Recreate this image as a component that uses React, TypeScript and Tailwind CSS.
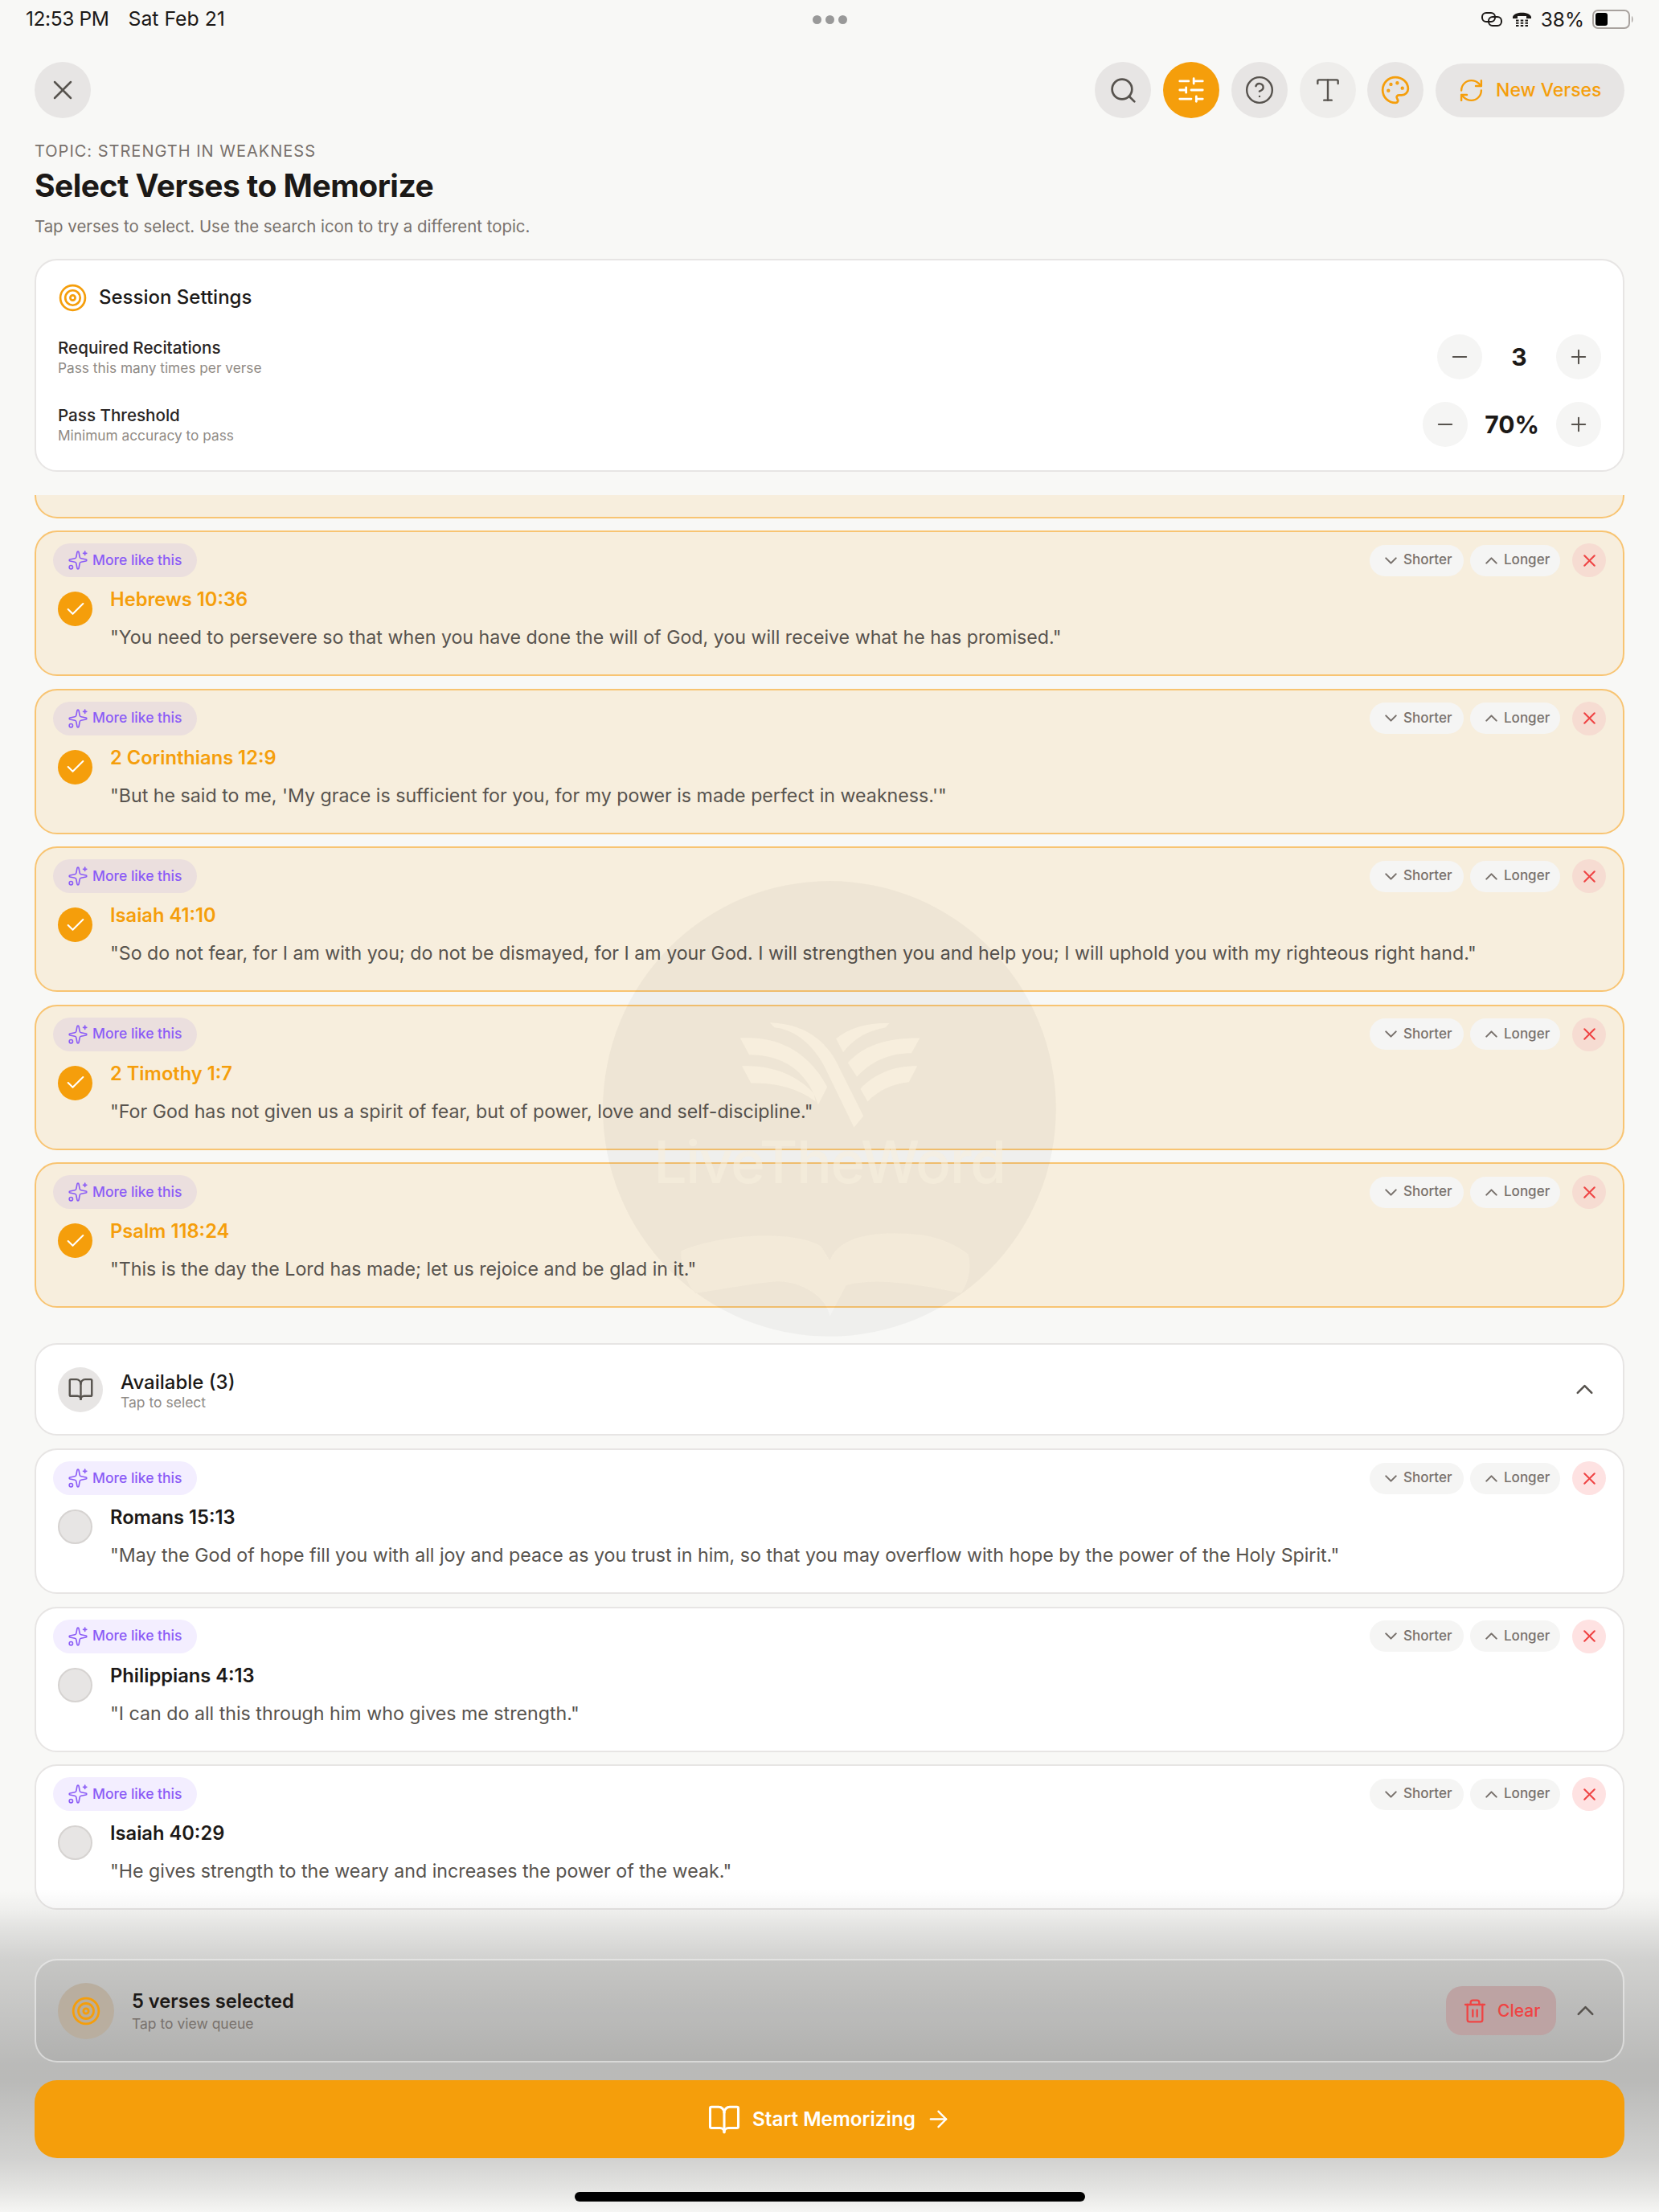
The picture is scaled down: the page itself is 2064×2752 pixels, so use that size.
import {
  ArrowRight,
  BookOpen,
  Check,
  ChevronDown,
  ChevronUp,
  CircleHelp,
  Minus,
  Palette,
  Plus,
  RefreshCw,
  Search,
  SlidersHorizontal,
  Sparkles,
  Target,
  Trash2,
  Type,
  X,
} from "lucide-react";

const selected = [
  { ref: "Hebrews 10:36", text: "\"You need to persevere so that when you have done the will of God, you will receive what he has promised.\"" },
  { ref: "2 Corinthians 12:9", text: "\"But he said to me, 'My grace is sufficient for you, for my power is made perfect in weakness.'\"" },
  { ref: "Isaiah 41:10", text: "\"So do not fear, for I am with you; do not be dismayed, for I am your God. I will strengthen you and help you; I will uphold you with my righteous right hand.\"" },
  { ref: "2 Timothy 1:7", text: "\"For God has not given us a spirit of fear, but of power, love and self-discipline.\"" },
  { ref: "Psalm 118:24", text: "\"This is the day the Lord has made; let us rejoice and be glad in it.\"" },
];

const available = [
  { ref: "Romans 15:13", text: "\"May the God of hope fill you with all joy and peace as you trust in him, so that you may overflow with hope by the power of the Holy Spirit.\"" },
  { ref: "Philippians 4:13", text: "\"I can do all this through him who gives me strength.\"" },
  { ref: "Isaiah 40:29", text: "\"He gives strength to the weary and increases the power of the weak.\"" },
];

function VerseCard({ verse, active }: { verse: { ref: string; text: string }; active: boolean }) {
  return (
    <div
      className={
        active
          ? "h-[181px] shrink-0 rounded-[28px] border-2 border-[#f8c472] bg-[#f7eedd] px-[21px] pt-[14px]"
          : "h-[181px] shrink-0 rounded-[28px] border-2 border-[#e7e5e4] bg-white px-[21px] pt-[14px]"
      }
    >
      <div className="flex h-[42px] items-center justify-between">
        <div
          className={
            active
              ? "flex h-[42px] w-[179px] items-center gap-[5px] rounded-full bg-[#ebdfde] pl-[18px] text-[17.5px] font-medium text-[#8b5cf6]"
              : "flex h-[42px] w-[179px] items-center gap-[5px] rounded-full bg-[#f3eeff] pl-[18px] text-[17.5px] font-medium text-[#8b5cf6]"
          }
        >
          <Sparkles size={26} strokeWidth={1.5} />
          <span>More like this</span>
        </div>
        <div className="flex items-center">
          <div className="flex h-[39px] w-[117px] items-center gap-[3px] rounded-full bg-[#f5f5f4] pl-[14px] text-[17px] font-medium text-[#78716c]">
            <ChevronDown size={25} strokeWidth={2} />
            <span>Shorter</span>
          </div>
          <div className="ml-[8px] flex h-[39px] w-[112px] items-center gap-[3px] rounded-full bg-[#f5f5f4] pl-[14px] text-[17px] font-medium text-[#78716c]">
            <ChevronUp size={25} strokeWidth={2} />
            <span>Longer</span>
          </div>
          <div
            className={
              active
                ? "ml-[15px] flex h-[42px] w-[42px] items-center justify-center rounded-full bg-[#f6dcd2] text-[#ef4444]"
                : "ml-[15px] flex h-[42px] w-[42px] items-center justify-center rounded-full bg-[#fee2e2] text-[#ef4444]"
            }
          >
            <X size={25} strokeWidth={2} />
          </div>
        </div>
      </div>
      <div className="ml-[6px] flex gap-[22px]">
        <div className="pt-[18px]">
          {active ? (
            <div className="flex h-[43px] w-[43px] items-center justify-center rounded-full bg-[#f59e0b] text-white">
              <Check size={28} strokeWidth={1.75} />
            </div>
          ) : (
            <div className="h-[43px] w-[43px] rounded-full border-2 border-[#d6d3d1] bg-[#e7e5e4]" />
          )}
        </div>
        <div className="pt-[12px]">
          <div className={active ? "text-[23.7px] leading-[32px] font-semibold text-[#f59e0b]" : "text-[23.7px] leading-[32px] font-semibold text-[#1c1917]"}>
            {verse.ref}
          </div>
          <div className="mt-[13px] text-[23.2px] leading-[36px] text-[#57534e]">{verse.text}</div>
        </div>
      </div>
    </div>
  );
}

function Stepper({ value }: { value: string }) {
  return (
    <div className="flex items-center gap-[21px]">
      <div className="flex h-[56px] w-[56px] items-center justify-center rounded-full bg-[#f5f5f4] text-[#57534e]">
        <Minus size={28} strokeWidth={1.75} />
      </div>
      <div className="min-w-[50px] text-center text-[30px] leading-[40px] font-bold text-[#1c1917]">{value}</div>
      <div className="flex h-[56px] w-[56px] items-center justify-center rounded-full bg-[#f5f5f4] text-[#57534e]">
        <Plus size={28} strokeWidth={1.75} />
      </div>
    </div>
  );
}

function SettingRow({ label, hint, value }: { label: string; hint: string; value: string }) {
  return (
    <div className="mt-[28px] flex h-[56px] items-center justify-between">
      <div>
        <div className="text-[20.6px] leading-[28px] font-medium text-[#292524]">{label}</div>
        <div className="text-[17.3px] leading-[22px] text-[#8f8a85]">{hint}</div>
      </div>
      <Stepper value={value} />
    </div>
  );
}

function IconButton({ active, children }: { active?: boolean; children: React.ReactNode }) {
  return (
    <div
      className={
        active
          ? "flex h-[70px] w-[70px] items-center justify-center rounded-full bg-[#f59e0b] text-white"
          : "flex h-[70px] w-[70px] items-center justify-center rounded-full bg-[#e7e5e4] text-[#57534e]"
      }
    >
      {children}
    </div>
  );
}

const bookPath =
  "M330,1240 C430,1190 640,1170 720,1225 L745,1270 C770,1190 880,1175 1000,1190 C1060,1200 1100,1225 1130,1250 C1140,1290 1130,1340 1110,1370 C1000,1345 880,1320 790,1345 L745,1440 C730,1370 650,1325 580,1335 C500,1345 430,1360 370,1370 C345,1340 330,1290 330,1240 Z";

function Watermark() {
  return (
    <>
      <svg className="pointer-events-none absolute top-[1060px] left-[700px] h-[620px] w-[700px]" viewBox="0 0 1568 1548" preserveAspectRatio="none">
        <path
          fill="#000000"
          fillOpacity="0.035"
          fillRule="evenodd"
          d={
            "M112,797.5 a631.5,707.5 0 1,0 1263,0 a631.5,707.5 0 1,0 -1263,0 Z " +
            "M578,530 C680,535 740,590 775,680 L838,820 L812,855 L740,690 C700,590 640,550 590,545 Z " +
            "M495,578 C610,570 690,630 737,730 L712,785 C680,675 610,630 520,630 Z " +
            "M500,665 C590,660 660,700 700,750 L705,775 C670,745 610,715 525,718 Z " +
            "M762,580 C800,545 850,530 910,532 L900,545 C850,555 810,580 782,622 Z " +
            "M795,655 C840,600 900,578 995,578 L972,625 C910,625 860,650 820,698 Z " +
            "M830,735 C870,690 920,665 988,665 L965,715 C920,720 880,740 850,775 Z " +
            bookPath
          }
        />
        <path fill="#000000" fillOpacity="0.017" d={bookPath} />
      </svg>
      <div className="pointer-events-none absolute top-[1404px] left-[750px] w-[564px] text-center text-[73px] leading-[84px] font-medium tracking-[-1.5px] text-[#f7eedd]/60">
        LiveTheWord
      </div>
    </>
  );
}

function StatusBar() {
  return (
    <div className="grid h-[48px] grid-cols-3 items-center pr-[31px] pl-[32px] text-[24.5px] text-[#1c1917]">
      <div className="flex gap-[24px]">
        <span className="tracking-[-0.4px]">12:53 PM</span>
        <span className="text-[24.8px]">Sat Feb 21</span>
      </div>
      <div className="flex justify-center gap-[5px]">
        <div className="h-[11px] w-[11px] rounded-full bg-[#999999]" />
        <div className="h-[11px] w-[11px] rounded-full bg-[#999999]" />
        <div className="h-[11px] w-[11px] rounded-full bg-[#999999]" />
      </div>
      <div className="flex items-center justify-end">
        <svg width="27" height="18" viewBox="0 0 27 18" fill="none" stroke="#1c1917" strokeWidth="2">
          <rect x="1" y="1" width="16" height="11" rx="5" />
          <rect x="9" y="6" width="16" height="11" rx="5" />
        </svg>
        <svg className="ml-[12px]" width="23" height="18" viewBox="0 0 23 18" fill="#1c1917">
          <path d="M0,6 C2,-1 21,-1 23,6 L23,8 L17,8 L17,5 L6,5 L6,8 L0,8 Z" />
          <path d="M4,9.5h3.5v2h-3.5z M9.75,9.5h3.5v2h-3.5z M15.5,9.5h3.5v2h-3.5z M4,12.75h3.5v2h-3.5z M9.75,12.75h3.5v2h-3.5z M15.5,12.75h3.5v2h-3.5z M4,16h3.5v2h-3.5z M9.75,16h3.5v2h-3.5z M15.5,16h3.5v2h-3.5z" />
        </svg>
        <span className="ml-[12px]">38%</span>
        <svg className="ml-[10px]" width="52" height="24" viewBox="0 0 52 24">
          <rect x="1" y="1" width="45" height="22" rx="6" fill="none" stroke="#a8a29e" strokeWidth="2" />
          <rect x="4" y="4" width="15" height="16" rx="3" fill="#000000" />
          <path d="M49,8 C51,9 51,15 49,16 Z" fill="#a8a29e" />
        </svg>
      </div>
    </div>
  );
}

export default function App() {
  return (
    <div className="relative flex h-[2752px] w-[2064px] flex-col overflow-hidden bg-[#f8f8f6] font-[family-name:Inter,sans-serif]">
      <StatusBar />

      <div className="px-[43px]">
        <div className="mt-[29px] flex h-[70px] items-center justify-between">
          <IconButton>
            <X size={40} strokeWidth={1.5} />
          </IconButton>
          <div className="flex items-center gap-[14.75px]">
            <IconButton>
              <Search size={37} strokeWidth={1.75} />
            </IconButton>
            <IconButton active>
              <SlidersHorizontal size={38} strokeWidth={1.75} />
            </IconButton>
            <IconButton>
              <CircleHelp size={38} strokeWidth={1.5} />
            </IconButton>
            <div className="flex h-[70px] w-[70px] items-center justify-center rounded-full bg-[#eeedeb] text-[#57534e]">
              <Type size={38} strokeWidth={1.5} />
            </div>
            <div className="flex h-[70px] w-[70px] items-center justify-center rounded-full bg-[#e7e5e4] text-[#f59e0b]">
              <Palette size={38} strokeWidth={1.75} />
            </div>
            <div className="flex h-[67px] w-[235px] items-center gap-[14px] rounded-full bg-[#e7e5e4] pl-[28px] text-[23px] font-medium text-[#f59e0b]">
              <RefreshCw size={33} strokeWidth={1.75} />
              <span>New Verses</span>
            </div>
          </div>
        </div>

        <div className="mt-[27px] text-[20px] leading-[28px] tracking-[1px] text-[#78716c]">TOPIC: STRENGTH IN WEAKNESS</div>
        <div className="mt-[5px] text-[39px] leading-[48px] font-bold tracking-[-0.5px] text-[#1c1917]">Select Verses to Memorize</div>
        <div className="mt-[12px] text-[20.4px] leading-[30px] text-[#78716c]">Tap verses to select. Use the search icon to try a different topic.</div>

        <div className="mt-[25px] h-[265px] rounded-[28px] border-2 border-[#e7e5e4] bg-white px-[27px] pt-[28px]">
          <div className="flex h-[36px] items-center gap-[14px]">
            <Target size={37} strokeWidth={1.75} className="text-[#f59e0b]" />
            <span className="text-[24px] font-medium text-[#1c1917]">Session Settings</span>
          </div>
          <SettingRow label="Required Recitations" hint="Pass this many times per verse" value="3" />
          <SettingRow label="Pass Threshold" hint="Minimum accuracy to pass" value="70%" />
        </div>
      </div>

      <div className="mt-[29px] flex min-h-0 flex-1 flex-col overflow-hidden px-[43px]">
        <div className="flex flex-col gap-[15.5px]">
          <div className="h-[28.5px] shrink-0 rounded-b-[28px] border-x-2 border-b-2 border-[#f8c472] bg-[#f7eedd]" />
          {selected.map((verse) => (
            <VerseCard key={verse.ref} verse={verse} active />
          ))}
        </div>

        <div className="mt-[44px] flex h-[115px] shrink-0 items-center rounded-[28px] border-2 border-[#e7e5e4] bg-white pr-[30px] pl-[27px]">
          <div className="flex h-[56px] w-[56px] items-center justify-center rounded-full bg-[#e7e5e4] text-[#57534e]">
            <BookOpen size={33} strokeWidth={1.75} />
          </div>
          <div className="ml-[22px] flex-1">
            <div className="text-[24px] leading-[32px] font-medium text-[#1c1917]">Available (3)</div>
            <div className="text-[17.5px] leading-[18px] text-[#8f8a85]">Tap to select</div>
          </div>
          <ChevronUp size={35} strokeWidth={1.75} className="text-[#57534e]" />
        </div>

        <div className="mt-[16px] flex flex-col gap-[15.5px]">
          {available.map((verse) => (
            <VerseCard key={verse.ref} verse={verse} active={false} />
          ))}
        </div>
      </div>

      <Watermark />

      <div className="absolute right-0 bottom-0 left-0 flex h-[402px] flex-col bg-[linear-gradient(to_bottom,rgba(0,0,0,0)_0%,rgba(0,0,0,0.04)_6.7%,rgba(0,0,0,0.09)_12.4%,rgba(0,0,0,0.155)_21.6%,rgba(0,0,0,0.25)_54.7%,rgba(0,0,0,0.25)_59.7%,rgba(0,0,0,0.155)_83.3%,rgba(0,0,0,0.09)_92%,rgba(0,0,0,0.01)_100%)] px-[43px] pt-[87px]">
        <div className="flex h-[129px] items-center rounded-[28px] border-2 border-white/50 bg-black/5 pr-[29px] pl-[27px]">
          <div className="flex h-[70px] w-[70px] items-center justify-center rounded-full bg-[#b9ae9f] text-[#f59e0b]">
            <Target size={38} strokeWidth={1.75} />
          </div>
          <div className="ml-[22px] flex-1">
            <div className="text-[23.7px] leading-[32px] font-semibold text-[#1c1917]">5 verses selected</div>
            <div className="mt-[1px] text-[17.5px] leading-[22px] text-[#78716c]">Tap to view queue</div>
          </div>
          <div className="flex h-[61px] w-[137px] items-center gap-[12px] rounded-[20px] bg-[#bda3a3] pl-[20px] text-[21px] font-medium text-[#ef4444]">
            <Trash2 size={32} strokeWidth={1.75} />
            <span>Clear</span>
          </div>
          <ChevronUp size={35} strokeWidth={1.75} className="ml-[19px] text-[#57534e]" />
        </div>
        <div className="mt-[22px] flex h-[97px] items-center justify-center rounded-[28px] bg-[#f59e0b] text-[24.3px] font-semibold text-white">
          <BookOpen size={42} strokeWidth={1.75} />
          <span className="ml-[14px]">Start Memorizing</span>
          <ArrowRight size={33} strokeWidth={1.75} className="ml-[12px]" />
        </div>
        <div className="mt-[42px] h-[12px] w-[635px] self-center rounded-full bg-black" />
      </div>
    </div>
  );
}
